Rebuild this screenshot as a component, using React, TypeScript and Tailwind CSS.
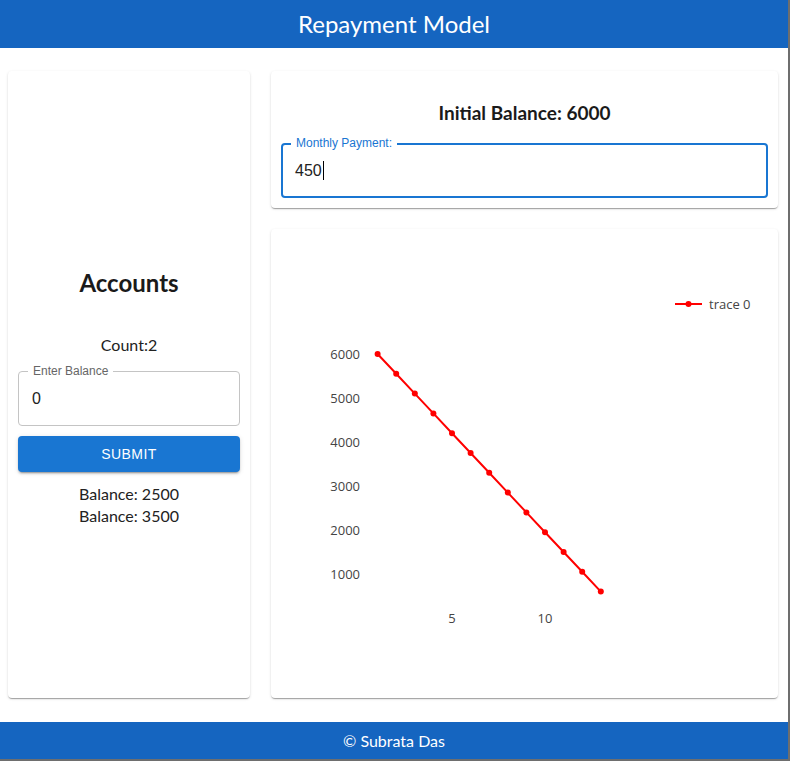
import React from "react";

function Chart() {
  const ox = 271;
  const oy = 228;
  const pts = Array.from({ length: 13 }, (_, i) => {
    const v = 6000 - 450 * i;
    const x = 452 + (i + 1 - 5) * 18.6 - ox;
    const y = 617 - (v / 1000) * 44 - oy;
    return [x, y];
  });
  const yt = [6000, 5000, 4000, 3000, 2000, 1000];
  return (
    <svg width="507" height="469" className="block font-['Open_Sans',sans-serif]">
      {yt.map((v) => (
        <text key={v} x={360 - ox} y={617 - (v / 1000) * 44 - oy + 4.5} textAnchor="end" fontSize="13" fill="#444">
          {v}
        </text>
      ))}
      <text x={452 - ox} y={622 - oy} textAnchor="middle" fontSize="13" fill="#444">5</text>
      <text x={545 - ox} y={622 - oy} textAnchor="middle" fontSize="13" fill="#444">10</text>
      <polyline points={pts.map((p) => p.join(",")).join(" ")} fill="none" stroke="#ff0000" strokeWidth="2" />
      {pts.map((p, i) => (
        <circle key={i} cx={p[0]} cy={p[1]} r="3" fill="#ff0000" />
      ))}
      <line x1={675 - ox} y1={303 - oy} x2={702 - ox} y2={303 - oy} stroke="#ff0000" strokeWidth="2" />
      <circle cx={688.5 - ox} cy={303 - oy} r="3" fill="#ff0000" />
      <text x={709 - ox} y={307.5 - oy} fontSize="13" fill="#444">trace 0</text>
    </svg>
  );
}

const paper =
  "bg-white rounded-[4px] shadow-[0_2px_1px_-1px_rgba(0,0,0,0.2),0_1px_1px_0_rgba(0,0,0,0.14),0_1px_3px_0_rgba(0,0,0,0.12)]";

export default function App() {
  return (
    <div className="w-[790px] h-[761px] bg-[#6e6e6e] font-['Lato','Noto_Sans',sans-serif]">
      <div className="w-[788px] h-[759px] bg-white flex flex-col">
        <header className="h-[48px] shrink-0 bg-[#1565c0] flex items-center justify-center text-white text-[24px]">
          Repayment Model
        </header>
        <main className="flex shrink-0 pl-[8px] pt-[23px] gap-[21px] h-[674px]">
          <section className={`${paper} w-[242px] h-[627px] flex flex-col items-center px-[10px] pt-[196px]`}>
            <h2 className="text-[24px] leading-[32px] font-bold text-[#1a1a1a]">Accounts</h2>
            <div className="mt-[34px] text-[16px] leading-[24px] text-[#222]">Count:2</div>
            <div className="relative mt-[14px] w-full h-[55px] border border-[#c4c4c4] rounded-[4px] flex items-center px-[13px] font-['Liberation_Sans',Arial,sans-serif]">
              <span className="absolute left-[9px] top-[-8px] bg-white px-[5px] text-[12px] leading-[14px] text-[#666]">
                Enter Balance
              </span>
              <span className="text-[16px] text-[#222]">0</span>
            </div>
            <button className="mt-[10px] w-full h-[36px] bg-[#1976d2] text-white text-[14px] rounded-[4px] tracking-[0.4px] font-['Liberation_Sans',Arial,sans-serif] shadow-[0_3px_1px_-2px_rgba(0,0,0,0.2),0_2px_2px_0_rgba(0,0,0,0.14),0_1px_5px_0_rgba(0,0,0,0.12)]">
              SUBMIT
            </button>
            <div className="mt-[11px] text-[16px] leading-[22px] text-[#222] text-center">
              <div>Balance: 2500</div>
              <div>Balance: 3500</div>
            </div>
          </section>
          <div className="w-[507px] flex flex-col gap-[21px]">
            <section className={`${paper} h-[137px] flex flex-col px-[10px] pt-[30px]`}>
              <h3 className="text-center text-[19px] leading-[24px] font-bold text-[#1a1a1a]">Initial Balance: 6000</h3>
              <div className="relative mt-[18px] w-full h-[55px] border-2 border-[#1976d2] rounded-[4px] flex items-center px-[12px] font-['Liberation_Sans',Arial,sans-serif]">
                <span className="absolute left-[8px] top-[-9px] bg-white px-[5px] text-[12px] leading-[14px] text-[#1976d2]">
                  Monthly Payment:
                </span>
                <span className="text-[16px] text-[#222]">450</span>
                <span className="inline-block w-px h-[19px] bg-black ml-px" />
              </div>
            </section>
            <section className={`${paper} h-[469px] overflow-hidden`}>
              <Chart />
            </section>
          </div>
        </main>
        <footer className="h-[37px] shrink-0 bg-[#1565c0] flex items-center justify-center text-white text-[16px]">
          © Subrata Das
        </footer>
      </div>
    </div>
  );
}
